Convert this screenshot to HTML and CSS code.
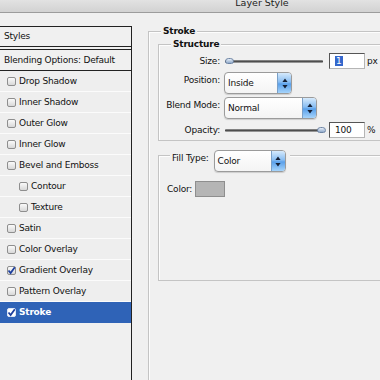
FILE: index.html
```html
<!DOCTYPE html>
<html>
<head>
<meta charset="utf-8">
<title>Layer Style</title>
<link rel="stylesheet" href="styles.css">
</head>
<body>
<div class="window">
  <div class="titlebar"><span class="title">Layer Style</span></div>
  <div class="main">
    <aside class="styles">
      <div class="styles-head">Styles</div>
      <div class="blend-opts">Blending Options: Default</div>
      <ul class="fx">
        <li class="fx-row"><span class="cb"></span>Drop Shadow</li>
        <li class="fx-row"><span class="cb"></span>Inner Shadow</li>
        <li class="fx-row"><span class="cb"></span>Outer Glow</li>
        <li class="fx-row"><span class="cb"></span>Inner Glow</li>
        <li class="fx-row"><span class="cb"></span>Bevel and Emboss</li>
        <li class="fx-row sub"><span class="cb"></span>Contour</li>
        <li class="fx-row sub"><span class="cb"></span>Texture</li>
        <li class="fx-row"><span class="cb"></span>Satin</li>
        <li class="fx-row"><span class="cb"></span>Color Overlay</li>
        <li class="fx-row"><span class="cb checked"><svg viewBox="0 0 9 9" width="9" height="9"><path d="M1.5 4.5 L3.6 7 L7.8 1.2" fill="none" stroke="#1d3f9e" stroke-width="1.8"/></svg></span>Gradient Overlay</li>
        <li class="fx-row"><span class="cb"></span>Pattern Overlay</li>
        <li class="fx-row active"><span class="cb checked"><svg viewBox="0 0 9 9" width="9" height="9"><path d="M1.5 4.5 L3.6 7 L7.8 1.2" fill="none" stroke="#1d3f9e" stroke-width="1.8"/></svg></span>Stroke</li>
      </ul>
    </aside>
    <section class="content">
      <fieldset class="grp stroke">
        <legend class="legend-bold stroke-legend">Stroke</legend>
        <fieldset class="grp structure">
          <legend class="legend-bold structure-legend">Structure</legend>
          <div class="form">
            <label class="lbl">Size:</label>
            <div class="ctl">
              <div class="slider"><span class="track"></span><span class="thumb thumb-min"></span></div>
              <div class="num"><span class="sel">1</span></div>
              <span class="unit">px</span>
            </div>
            <label class="lbl">Position:</label>
            <div class="ctl">
              <div class="select w-pos"><span class="sel-text">Inside</span><span class="sel-btn"><svg width="6" height="11" viewBox="0 0 6 11"><path d="M3 0.5 L5.6 4 H0.4Z M0.4 7 H5.6 L3 10.5Z" fill="#152035"/></svg></span></div>
            </div>
            <label class="lbl">Blend Mode:</label>
            <div class="ctl">
              <div class="select w-blend"><span class="sel-text">Normal</span><span class="sel-btn"><svg width="6" height="11" viewBox="0 0 6 11"><path d="M3 0.5 L5.6 4 H0.4Z M0.4 7 H5.6 L3 10.5Z" fill="#152035"/></svg></span></div>
            </div>
            <label class="lbl">Opacity:</label>
            <div class="ctl">
              <div class="slider"><span class="track"></span><span class="thumb thumb-max"></span></div>
              <div class="num">100</div>
              <span class="unit">%</span>
            </div>
          </div>
        </fieldset>
        <fieldset class="grp fill">
          <legend class="fill-legend">
            <span class="fill-label">Fill Type:</span>
            <div class="select w-fill"><span class="sel-text">Color</span><span class="sel-btn"><svg width="6" height="11" viewBox="0 0 6 11"><path d="M3 0.5 L5.6 4 H0.4Z M0.4 7 H5.6 L3 10.5Z" fill="#152035"/></svg></span></div>
          </legend>
          <div class="color-row"><span>Color:</span><span class="swatch"></span></div>
        </fieldset>
      </fieldset>
    </section>
  </div>
</div>
</body>
</html>
```
FILE: styles.css
```css
* { box-sizing: border-box; margin: 0; padding: 0; }
html, body { width: 380px; height: 380px; overflow: hidden; background: #f0f0f0; }
body {
  font-family: "DejaVu Sans", "Liberation Sans", sans-serif;
  font-size: 9px;
  letter-spacing: -0.2px;
  color: #111;
}
.window { width: 524px; height: 380px; }

.titlebar {
  height: 13px;
  background: linear-gradient(#e2e2e2, #d2d2d2);
  border-bottom: 1px solid #9c9c9c;
  text-align: center;
  overflow: hidden;
  font-size: 9.5px;
  letter-spacing: 0;
  line-height: 12px;
  color: #222;
}
.title { display: block; margin-top: -3px; }

.main { display: flex; align-items: flex-start; }

.styles {
  width: 133px;
  margin-left: -1px;
  margin-top: 13px;
  height: 400px;
  border-left: 1px solid #222;
  border-right: 1px solid #222;
  border-top: 1px solid #222;
  flex: none;
}
.styles-head {
  height: 20px;
  line-height: 19px;
  padding-left: 4px;
  border-bottom: 1px solid #222;
}
.blend-opts {
  margin-top: 2px;
  height: 22px;
  line-height: 20px;
  padding-left: 4px;
  border-top: 1px solid #222;
  border-bottom: 1px solid #222;
}
.fx { list-style: none; }
.fx-row {
  height: 21px;
  display: flex;
  align-items: center;
  gap: 3px;
  padding-left: 7px;
  border-bottom: 1px solid #fbfbfb;
  background: #eeeeee;
}
.fx-row.sub { padding-left: 19px; }
.fx-row.active {
  background: #2f63b7;
  color: #fff;
  font-weight: bold;
  border-bottom-color: #2f63b7;
}
.cb {
  width: 9px;
  height: 9px;
  border: 1px solid #8e8e8e;
  border-radius: 2px;
  background: linear-gradient(#fafafa, #d8d8d8);
  display: inline-flex;
  align-items: center;
  justify-content: center;
  flex: none;
}
.cb svg { display: block; margin: -1px; }
.active .cb { background: #fff; border-color: #dde6f5; }

.content {
  flex: 1;
  padding-left: 16px;
  padding-top: 12px;
}
.grp {
  border: 1px solid #c4c4c4;
  box-shadow: inset 1px 1px 0 #fdfdfd;
  min-width: 0;
}
.legend-bold {
  font-weight: bold;
  line-height: 12px;
  padding: 0 2px;
  background: #f0f0f0;
}
.stroke { padding: 1px 0 200px 9px; }
.stroke-legend { margin-left: 3px; }
.structure { padding: 3px 0 2px 0; }
.structure-legend { margin-left: 12px; }

.form {
  display: grid;
  grid-template-columns: 61px 1fr;
  grid-template-rows: 16px 22px 22px 16px;
  column-gap: 4px;
  row-gap: 3px;
}
.lbl {
  text-align: right;
  line-height: 16px;
  align-self: start;
}
.ctl { display: flex; align-items: center; }

.slider {
  position: relative;
  width: 98px;
  height: 16px;
  margin-left: 1px;
  display: flex;
  align-items: center;
}
.track {
  display: block;
  width: 100%;
  height: 3px;
  background: linear-gradient(#9a9a9a, #4e4e4e 50%, #b8b8b8);
  border-radius: 1px;
}
.thumb {
  position: absolute;
  top: 5px;
  width: 9px;
  height: 6px;
  border-radius: 4px 4px 3px 3px;
  background: linear-gradient(#e6eef8, #8fa9ca);
  border: 1px solid #6d84a4;
}
.thumb-min { left: 0; }
.thumb-max { right: -3px; }

.num {
  width: 36px;
  height: 16px;
  margin-left: 6px;
  background: #fff;
  border: 1px solid;
  border-color: #555 #b5b5b5 #b5b5b5 #555;
  padding-left: 5px;
  line-height: 14px;
}
.sel { background: #3467cc; color: #fff; padding: 0 1px; }
.unit { margin-left: 2px; }

.select {
  height: 22px;
  display: flex;
  border: 1px solid #9b9b9b;
  border-radius: 4px;
  background: linear-gradient(#ffffff, #f4f4f4);
  box-shadow: 0 1px 1px rgba(0,0,0,0.15);
  overflow: hidden;
}
.sel-text { flex: 1; padding-left: 3px; line-height: 21px; }
.sel-btn {
  width: 14px;
  flex: none;
  display: flex;
  align-items: center;
  justify-content: center;
  border-left: 1px solid #7aa0c8;
  background: linear-gradient(#d6eafc, #88bdf2 45%, #5aa0ea 55%, #a6d4fb);
}
.w-pos { width: 68px; }
.w-blend { width: 93px; }
.w-fill { width: 72px; }

.fill { margin-top: 9px; padding: 21px 0 83px 8px; }
.fill-legend {
  margin-left: 3px;
  padding: 0 4px 0 2px;
  height: 10px;
  display: flex;
  align-items: flex-start;
  gap: 5px;
  background: #f0f0f0;
}
.fill-label { line-height: 16px; }
.color-row { display: flex; align-items: center; gap: 3px; }
.swatch {
  width: 30px;
  height: 16px;
  background: #b5b5b5;
  border: 1px solid #8e8e8e;
}
```
